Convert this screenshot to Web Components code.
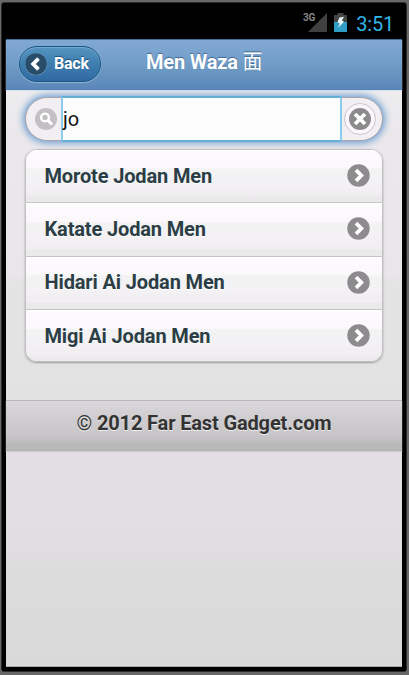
<!DOCTYPE html>
<html lang="en">
<head>
<meta charset="utf-8">
<title>Men Waza</title>
<style>
html,body{margin:0;height:100%;overflow:hidden}
body{font-family:Roboto,"Noto Sans CJK JP",sans-serif;background:#666}
.cjk,.sign{font-weight:400}
</style>
</head>
<body>
<phone-frame>
  <status-bar slot="status" time="3:51" network="3G"></status-bar>
  <title-bar><back-button slot="start">Back</back-button>Men Waza <span class="cjk">面</span></title-bar>
  <search-field value="jo"></search-field>
  <list-view>
    <list-row>Morote Jodan Men</list-row>
    <list-row>Katate Jodan Men</list-row>
    <list-row>Hidari Ai Jodan Men</list-row>
    <list-row>Migi Ai Jodan Men</list-row>
  </list-view>
  <page-footer><span class="sign">©</span> 2012 Far East Gadget.com</page-footer>
</phone-frame>
<script>
function define(name, html) {
  customElements.define(name, class extends HTMLElement {
    connectedCallback() {
      if (this.shadowRoot) return;
      const t = document.createElement('template');
      t.innerHTML = html.replace(/\{(\w+)\}/g, (m, k) => this.getAttribute(k) || '');
      this.attachShadow({mode: 'open'}).append(t.content.cloneNode(true));
    }
  });
}

define('phone-frame', `<style>
:host{display:block;box-sizing:border-box;width:409px;height:675px;padding:2px 2px 3px 1px;background:#686868}
.bezel{box-sizing:border-box;height:670px;background:#000;border:1px solid #2b2b2b;border-radius:3px;padding:0 4px;display:flex;flex-direction:column}
.screen{box-sizing:border-box;height:628px;border-bottom:1px solid #aaa;
background:linear-gradient(#ededee 50px,#ebe8eb 95px,#e9e5e9 239px,#e4e4e4 240px,#e2e2e2 362px,#e4dfe4 412px,#e2dde2 505px,#dcdcdc 530px,#d9d9d9)}
</style><div class="bezel"><slot name="status"></slot><div class="screen"><slot></slot></div></div>`);

define('status-bar', `<style>
:host{display:flex;height:36px;box-sizing:border-box;padding:9px 8px 0 0;justify-content:flex-end;align-items:flex-start}
.net{font:bold 10px/11px Roboto,sans-serif;color:#858585;margin:0 -8px 0 0;letter-spacing:-.2px}
svg{display:block}
.sig{margin-right:7px}
.time{font:20px/24px Roboto,sans-serif;color:#33b5e5;margin-left:9px;letter-spacing:-.2px}
</style><span class="net">{network}</span>
<svg class="sig" width="20" height="20" viewBox="0 0 20 20"><path d="M20 1V20H1Z" fill="#404040"/></svg>
<svg width="13" height="20" viewBox="0 0 13 20"><path d="M3.5 1h6v2H13v8H0V3h3.5Z" fill="#444"/><path d="M0 10h13v10H0Z" fill="#2f9dc4"/><path d="M5.4 5.5 10 4.8 8 8.5l2 1.2-6 6.3 1.7-4.6L3.5 10Z" fill="#e8f2f6"/></svg>
<span class="time">{time}</span>`);

define('title-bar', `<style>
:host{display:grid;grid-template-columns:127px 1fr;box-sizing:border-box;height:51px;border-top:1px solid #3d6d9d;border-bottom:1px solid #5582b0;
background:linear-gradient(#81a9d2,#759fcb 40%,#6c99c2 60%,#5a87ba);box-shadow:0 1px 1px #dce4ef;padding:6px 12px;align-items:start}
h1{margin:0;padding-left:1px;font:bold 20px/32px Roboto,"Noto Sans CJK JP",sans-serif;color:#fff;text-shadow:0 -1px 1px #3e6790;white-space:nowrap;letter-spacing:-.2px}
</style><slot name="start"></slot><h1><slot></slot></h1>`);

define('back-button', `<style>
:host{display:flex;align-items:center;box-sizing:border-box;width:82px;height:36px;margin-left:1px;border:1.5px solid #175684;border-radius:18px;padding-left:5px;gap:7px;
background:linear-gradient(#5594c0,#3e7fb0 50%,#3168a3);box-shadow:0 1px 1px #91b3d5,inset 0 1px 1px #7cacd0;font:bold 16px/32px Roboto,sans-serif;color:#fff;text-shadow:0 -1px 1px #194b7e;letter-spacing:-.2px}
svg{flex:none}
</style><svg width="22" height="22" viewBox="0 0 22 22"><circle cx="11" cy="11.5" r="11" fill="#82afd2"/><circle cx="11" cy="11" r="10.8" fill="#294c68"/><path d="m13.5 5.7-5.3 5.3 5.3 5.3" fill="none" stroke="#fff" stroke-width="3.8"/></svg><slot></slot>`);

define('search-field', `<style>
:host{display:flex;box-sizing:border-box;width:358px;height:44px;margin:7px 0 0 19px;border:1px solid #aaa4a8;border-radius:22px;background:#f2eff3;box-shadow:0 0 7px 2px #6b9dd3}
.lead{width:35px;display:flex;align-items:center;justify-content:flex-end;padding-right:4px;box-sizing:border-box}
.input{box-sizing:border-box;width:281px;height:46px;margin-top:-2px;border:2px solid #63afd5;border-left-color:#8ccbea;border-right-color:#8ccbea;background:#fdfdfd;font:20px/42px Roboto,sans-serif;color:#111;padding-left:0}
.clear{box-sizing:border-box;width:32px;height:32px;border:1px solid #c8c5c8;border-radius:50%;margin:5px 0 0 2px;background:#f9f7fa;display:grid;place-items:center}
</style><div class="lead"><svg width="22" height="22" viewBox="0 0 22 22"><circle cx="11" cy="11" r="11" fill="#c3c0c3"/><circle cx="10" cy="9.5" r="3.9" fill="none" stroke="#fff" stroke-width="2.4"/><path d="m13 12.5 4 4" stroke="#fff" stroke-width="3"/></svg></div>
<div class="input">{value}</div>
<div class="clear"><svg width="22" height="22" viewBox="0 0 22 22"><circle cx="11" cy="11" r="11" fill="#8c8a8c"/><path d="m6 6 10 10M16 6 6 16" stroke="#fff" stroke-width="3.8"/></svg></div>`);

define('list-view', `<style>
:host{display:block;box-sizing:border-box;width:358px;height:213px;margin:8px 0 0 19px;border:1px solid #c2c0c2;border-radius:12px;overflow:hidden;box-shadow:0 1px 2px #999}
</style><slot></slot>`);

define('list-row', `<style>
:host{display:flex;box-sizing:border-box;height:53.25px;align-items:center;justify-content:space-between;padding:0 12px 0 18.5px;border-bottom:1px solid #c4c3c5;
background:linear-gradient(#fdfbfe,#faf8fa 35%,#f3f3f3 36%,#f3f1f4 65%,#f1edf2 87%,#eaeaea 89%);box-shadow:inset 0 1px #fff;font:bold 20px/51px Roboto,sans-serif;color:#2b3e46;text-shadow:0 1px #fff;letter-spacing:-.14px}
:host(:last-child){border-bottom:0}
svg{margin-top:-1px}
</style><span><slot></slot></span><svg width="23" height="23" viewBox="0 0 23 23"><circle cx="11.5" cy="12.3" r="10.7" fill="#fff"/><circle cx="11.5" cy="11.5" r="11.2" fill="#8d8b8d"/><path d="m9 6.2 5.3 5.3L9 16.8" fill="none" stroke="#fff" stroke-width="3.8"/></svg>`);

define('page-footer', `<style>
:host{display:block;box-sizing:border-box;height:51px;margin-top:38px;border-top:1px solid #b9b9b9;border-bottom:1px solid #b4b4b4;background:linear-gradient(#dad8da,#cfcdd0 35%,#c8c6c8 70%,#bebbbe 86%,#b7b8b7 87%);box-shadow:0 1px 1px #cfcdcf;
text-align:center;font:bold 20px/44px Roboto,sans-serif;color:#333;text-shadow:0 1px #eee;letter-spacing:-.14px}
</style><slot></slot>`);
</script>
</body>
</html>
